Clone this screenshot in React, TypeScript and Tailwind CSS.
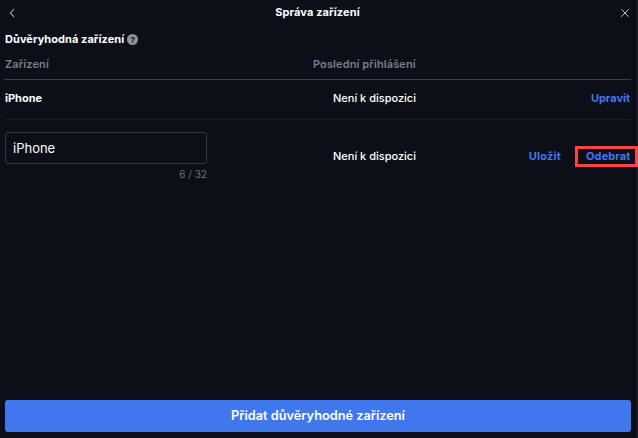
import React from "react";
import { ChevronLeft, X } from "lucide-react";

const App: React.FC = () => {
  return (
    <div className="w-[638px] h-[438px] bg-[#0c0f18] text-white flex flex-col overflow-hidden shadow-[inset_-1px_0_0_#1f222b] font-['Inter',sans-serif]">
      {/* Header */}
      <div className="h-[25px] flex items-center justify-between pl-[5px] pr-[6px] shrink-0">
        <ChevronLeft size={14} strokeWidth={1.75} className="text-[#c8ccd2]" />
        <span className="text-[11px] font-bold tracking-[0.01em] mr-[2px]">Správa zařízení</span>
        <X size={14} strokeWidth={1.5} className="text-[#d4d7dc]" />
      </div>

      <div className="flex-1 flex flex-col pl-[5px] pr-[7px]">
        <div className="flex items-center gap-[3px] h-[15px] mt-[7px]">
          <span className="text-[11px] font-bold tracking-[0.005em]">Důvěryhodná zařízení</span>
          <span className="w-[11px] h-[11px] rounded-full bg-[#8f929a] text-[#0c0f18] text-[8px] font-bold flex items-center justify-center">?</span>
        </div>

        {/* Table head */}
        <div className="flex items-center h-[33px] border-b border-[#3a3e4a] text-[11px] font-semibold tracking-[0.01em] text-[#747f8f] pt-[2px]">
          <span className="w-[308px]">Zařízení</span>
          <span>Poslední přihlášení</span>
        </div>

        {/* Row */}
        <div className="flex items-center h-[40px] border-b border-[#1a1d26] text-[11px] font-medium pb-[2px]">
          <span className="w-[328px] font-bold">iPhone</span>
          <span>Není k dispozici</span>
          <span className="ml-auto font-bold text-[#3f78ee] pr-[1px]">Upravit</span>
        </div>

        {/* Edit row */}
        <div className="flex items-start mt-[12px]">
          <div className="w-[328px] shrink-0">
            <div className="w-[202px] h-[32px] border border-[#343846] rounded-[3px] flex items-center pl-[7px] pt-[2px] text-[13px] font-normal">iPhone</div>
            <div className="w-[202px] text-right text-[10px] text-[#6b7280] mt-[3px]">6 / 32</div>
          </div>
          <span className="h-[48px] flex items-center text-[11px] font-medium">Není k dispozici</span>
          <div className="ml-auto h-[48px] flex items-center text-[11px] font-bold text-[#3f78ee]">
            <span className="mr-[14px] tracking-[0.02em]">Uložit</span>
            <span className="w-[63px] h-[21px] border-[3px] border-[#f9434a] flex items-center pl-[8px] mr-[-7px] tracking-[0.01em]">Odebrat</span>
          </div>
        </div>

        {/* Add button */}
        <button className="mt-auto mb-[6px] h-[32px] w-full rounded-[3px] bg-[#4177ec] text-[12.75px] font-semibold text-white">
          Přidat důvěryhodné zařízení
        </button>
      </div>
    </div>
  );
};

export default App;
